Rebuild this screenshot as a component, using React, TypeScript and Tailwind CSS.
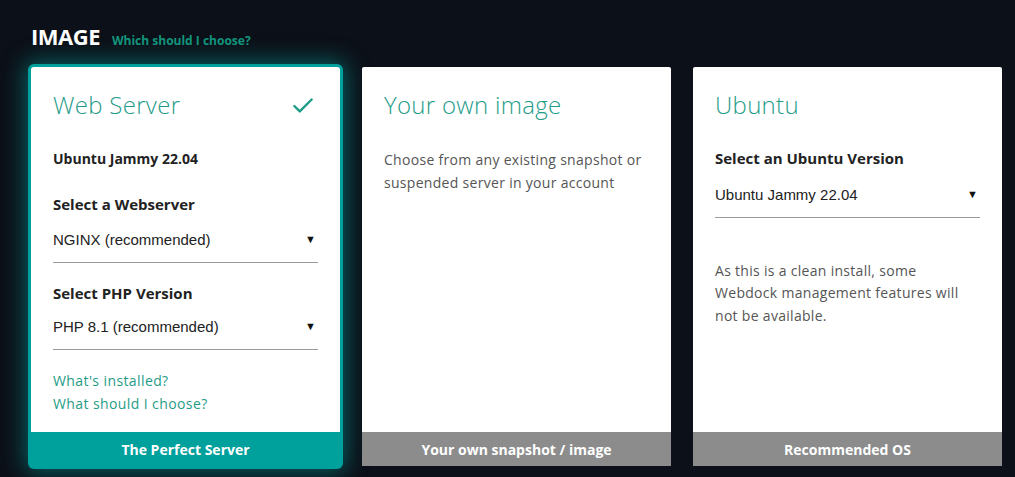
import { Check } from "lucide-react";

const FONT = { fontFamily: '"Open Sans", "Noto Sans", sans-serif' };

function SelectBox({ value }: { value: string }) {
  return (
    <div className="flex items-center justify-between border-b border-[#9a9a9a] pb-[12px] pt-[2px]">
      <span
        className="text-[15px] leading-[21px] text-[#222]"
        style={{ fontFamily: '"Liberation Sans", Arial, sans-serif' }}
      >
        {value}
      </span>
      <span className="mr-[2px] text-[11px] text-[#111]">▼</span>
    </div>
  );
}

function Card({
  title,
  footer,
  selected = false,
  children,
}: {
  title: string;
  footer: string;
  selected?: boolean;
  children: React.ReactNode;
}) {
  return (
    <div
      className={
        selected
          ? "flex h-[399px] flex-col rounded-[3px] bg-white ring-[3px] ring-[#00a19c] shadow-[0_0_22px_6px_rgba(0,161,156,0.55)]"
          : "flex h-[399px] flex-col rounded-[2px] bg-white"
      }
    >
      <div className="flex-1 px-[22px] pt-[22px]">
        <div className="flex items-start justify-between">
          <h2 className="text-[24px] font-light leading-[32px] tracking-[0.3px] text-[#1f9c88]">{title}</h2>
          {selected && <Check className="mr-[2px] mt-[4px] h-[26px] w-[26px] text-[#1f9c88]" strokeWidth={2.2} />}
        </div>
        {children}
      </div>
      <div
        className={
          selected
            ? "flex h-[34px] items-center justify-center bg-[#00a19c] text-[14px] font-bold text-white"
            : "flex h-[34px] items-center justify-center bg-[#8c8c8c] text-[14px] font-bold text-white"
        }
      >
        {footer}
      </div>
    </div>
  );
}

export default function App() {
  return (
    <div className="min-h-[477px] w-[1015px] bg-[#0c1018] pl-[31px] pt-[20px]" style={FONT}>
      <div className="flex items-baseline gap-[12px]">
        <h1 className="text-[22px] font-bold tracking-[-0.5px] text-white">IMAGE</h1>
        <a className="text-[12px] font-bold text-[#13957c]">Which should I choose?</a>
      </div>
      <div className="mt-[14px] grid w-[971px] grid-cols-[309px_309px_309px] gap-[22px]">
        <Card title="Web Server" footer="The Perfect Server" selected>
          <p className="mt-[27px] text-[14px] font-bold text-[#222]">Ubuntu Jammy 22.04</p>
          <p className="mt-[24px] text-[15px] font-bold text-[#222]">Select a Webserver</p>
          <div className="mt-[11px]">
            <SelectBox value="NGINX (recommended)" />
          </div>
          <p className="mt-[19px] text-[15px] font-bold text-[#222]">Select PHP Version</p>
          <div className="mt-[10px]">
            <SelectBox value="PHP 8.1 (recommended)" />
          </div>
          <div className="mt-[19px] flex flex-col text-[14px] leading-[23px] tracking-[0.4px] text-[#1f9c88]">
            <a>What's installed?</a>
            <a>What should I choose?</a>
          </div>
        </Card>
        <Card title="Your own image" footer="Your own snapshot / image">
          <p className="mt-[27px] text-[14px] leading-[23px] tracking-[0.3px] text-[#555]">
            Choose from any existing snapshot or suspended server in your account
          </p>
        </Card>
        <Card title="Ubuntu" footer="Recommended OS">
          <p className="mt-[26px] text-[15px] font-bold text-[#222]">Select an Ubuntu Version</p>
          <div className="mt-[12px]">
            <SelectBox value="Ubuntu Jammy 22.04" />
          </div>
          <p className="mt-[42px] text-[14px] leading-[22.5px] tracking-[0.3px] text-[#555]">
            As this is a clean install, some Webdock management features will not be available.
          </p>
        </Card>
      </div>
    </div>
  );
}
